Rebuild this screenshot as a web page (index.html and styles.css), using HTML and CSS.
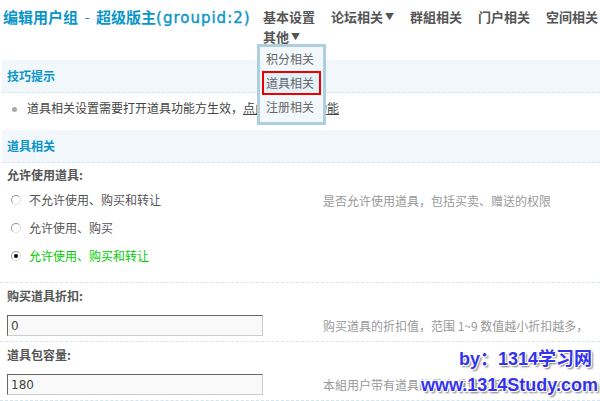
FILE: index.html
```html
<!DOCTYPE html>
<html lang="zh-CN">

<head>
    <meta charset="UTF-8" />
    <title>编辑用户组</title>
    <link rel="stylesheet" href="styles.css">
</head>

<body>
    <!-- Title + tabs -->
    <div class="topbar">
        <h1 class="title">编辑用户组 <span class="dash">-</span> 超级版主<span class="gid">(groupid:2)</span></h1>
        <ul class="tabs">
            <li>基本设置</li>
            <li>论坛相关<span class="arrow">▼</span></li>
            <li>群組相关</li>
            <li>门户相关</li>
            <li>空间相关</li>
            <li class="has-menu">其他<span class="arrow">▼</span>
                <div class="menu">
                    <div class="menu-item">积分相关</div>
                    <div class="menu-item current">道具相关</div>
                    <div class="menu-item">注册相关</div>
                </div>
            </li>
        </ul>
    </div>

    <!-- Tips -->
    <div class="section-head">技巧提示</div>
    <div class="tip"><span class="dot"></span>道具相关设置需要打开道具功能方生效，<a class="tip-link">点此开启道具功能</a></div>

    <!-- Settings -->
    <div class="section-head">道具相关</div>

    <div class="setting first">
        <div class="label">允许使用道具:</div>
        <div class="row">
            <div class="field">
                <div class="radio"><span class="radio-box"></span>不允许使用、购买和转让</div>
                <div class="radio"><span class="radio-box"></span>允许使用、购买</div>
                <div class="radio checked"><span class="radio-box"></span>允许使用、购买和转让</div>
            </div>
            <div class="desc top">是否允许使用道具，包括买卖、赠送的权限</div>
        </div>
    </div>

    <div class="setting">
        <div class="label">购买道具折扣:</div>
        <div class="row">
            <div class="field"><input class="text-input" type="text" value="0" /></div>
            <div class="desc">购买道具的折扣值，范围 1~9 数值越小折扣越多，</div>
        </div>
    </div>

    <div class="setting">
        <div class="label">道具包容量:</div>
        <div class="row">
            <div class="field"><input class="text-input" type="text" value="180" /></div>
            <div class="desc">本組用户带有道具的最大重量，范围 0~60000</div>
        </div>
    </div>

    <!-- watermark -->
    <div class="watermark">
        <div class="wm-by">by：1314学习网</div>
        <div class="wm-url">www.1314Study.com</div>
    </div>
</body>

</html>
```

FILE: styles.css
```css
body {
    margin: 0;
    padding: 0;
    font-family: "Noto Sans CJK SC", "DejaVu Sans", sans-serif;
    font-size: 12px;
    color: #444;
    background: #fff;
    width: 600px;
    height: 401px;
    overflow: hidden;
    position: relative;
}

.topbar {
    display: flex;
    height: 60px;
    padding: 7px 0 0 3px;
    box-sizing: border-box;
}

.title {
    margin: 0;
    flex: 0 0 260px;
    font-size: 15px;
    line-height: 20px;
    font-weight: bold;
    color: #0a96c8;
    font-family: "Noto Sans CJK SC", sans-serif;
    white-space: nowrap;
}

.dash {
    font-weight: normal;
    margin: 0 3px;
}

.gid {
    font-family: "DejaVu Sans", sans-serif;
    font-size: 15px;
    letter-spacing: 1px;
    font-weight: normal;
    -webkit-text-stroke: 0.4px #0a96c8;
}

.tabs {
    list-style: none;
    margin: 0;
    padding: 0;
    display: flex;
    flex-wrap: wrap;
    align-content: flex-start;
    flex: 0 0 337px;
    column-gap: 16px;
}

.tabs li {
    height: 20px;
    font-size: 13px;
    font-weight: bold;
    line-height: 20px;
    color: #555;
    white-space: nowrap;
}

.arrow {
    font-size: 9px;
    line-height: 0;
    margin-left: 2px;
    position: relative;
    top: -2px;
}

.has-menu {
    position: relative;
}

.menu {
    position: absolute;
    left: -6px;
    top: 17px;
    width: 63px;
    padding: 0 0 3px;
    border: 3px solid #aecfdc;
    background: #f3f8fc;
    z-index: 10;
}

.menu-item {
    margin: 0 2px;
    height: 24px;
    line-height: 24px;
    padding-left: 4px;
    font-weight: normal;
    font-size: 12px;
    color: #666;
    box-sizing: border-box;
}

.menu-item.current {
    border: 2px solid #e00;
    line-height: 20px;
    padding-left: 2px;
    background: #e4f0f8;
}

.section-head {
    margin-left: 2px;
    height: 32px;
    line-height: 32px;
    padding-left: 5px;
    background: #f2f7fc;
    border-bottom: 1px dashed #d3e6ef;
    color: #0a96c8;
    font-weight: bold;
    font-size: 12px;
}

.tip {
    height: 30px;
    line-height: 30px;
    padding-left: 12px;
    margin-bottom: 7px;
    color: #444;
}

.dot {
    display: inline-block;
    width: 5px;
    height: 5px;
    border-radius: 50%;
    background: #aaa;
    margin-right: 10px;
    vertical-align: middle;
}

.tip-link {
    text-decoration: underline;
    color: #444;
}

.setting {
    border-bottom: 1px dashed #d3e6ef;
    padding: 0 0 5px 7px;
}

.label {
    font-weight: bold;
    color: #555;
    line-height: 25px;
}

.setting.first {
    padding-bottom: 12px;
}

.setting.first .label {
    line-height: 22px;
    margin-top: 1px;
}

.row {
    display: flex;
}

.field {
    width: 316px;
}

.radio {
    height: 28px;
    line-height: 28px;
    display: flex;
    align-items: center;
    color: #555;
}

.radio.checked {
    color: #00cc00;
}

.radio-box {
    width: 8px;
    height: 8px;
    border: 1px solid #999;
    border-right-color: #ddd;
    border-bottom-color: #ddd;
    border-radius: 50%;
    background: #fff;
    margin: 0 8px 0 4px;
    position: relative;
}

.radio.checked .radio-box::after {
    content: "";
    position: absolute;
    left: 2px;
    top: 2px;
    width: 4px;
    height: 4px;
    border-radius: 50%;
    background: #000;
}

.text-input {
    display: block;
    margin-top: 7px;
    width: 256px;
    height: 21px;
    box-sizing: border-box;
    border: 1px solid #ccc;
    border-top-color: #666;
    border-left-color: #666;
    background: #f9f9f9;
    padding: 0 3px;
    font-family: "DejaVu Sans", sans-serif;
    font-size: 12px;
    color: #444;
}

.desc {
    color: #999;
    padding-top: 7px;
    line-height: 21px;
    white-space: nowrap;
}

.desc.top {
    padding-top: 0;
    line-height: 30px;
}

.watermark {
    position: absolute;
    right: 2px;
    bottom: 2px;
    text-align: right;
    font-family: "Liberation Sans", "Noto Sans CJK SC", sans-serif;
    font-weight: bold;
    color: #3333ee;
    text-shadow: 1px 1px 0 #fff, -1px -1px 0 #fff, 1px -1px 0 #fff, -1px 1px 0 #fff, 2px 2px 2px #777;
    z-index: 20;
}

.wm-by {
    font-size: 18px;
    line-height: 24px;
    padding-right: 6px;
}

.wm-url {
    font-size: 18px;
    line-height: 28px;
}
```
